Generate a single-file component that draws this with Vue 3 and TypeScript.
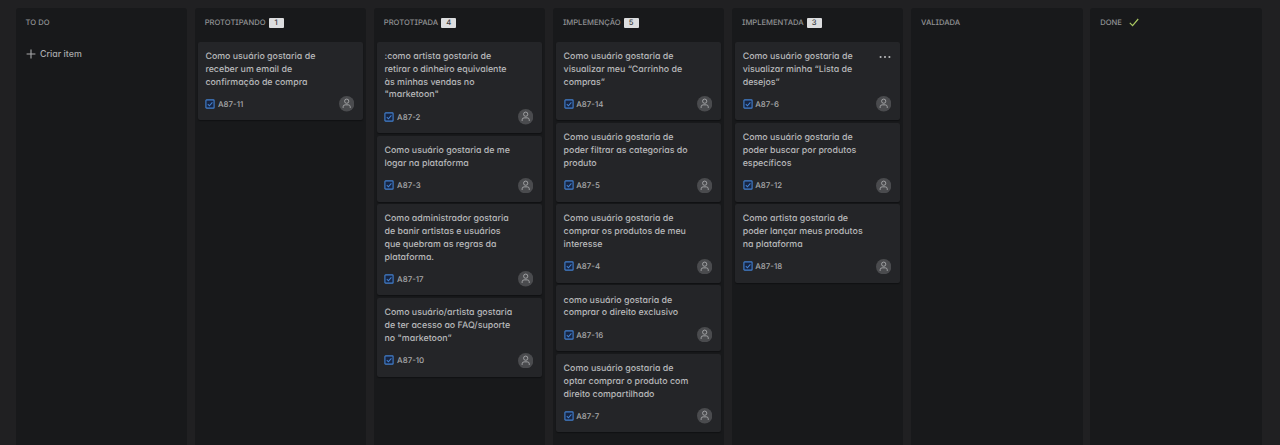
<script setup lang="ts">
interface Card {
  id: string
  lines: string[]
  menu?: boolean
}

interface Column {
  name: string
  count?: number
  done?: boolean
  create?: boolean
  cards: Card[]
}

const columns: Column[] = [
  { name: 'TO DO', create: true, cards: [] },
  {
    name: 'PROTOTIPANDO',
    count: 1,
    cards: [{ id: 'A87-11', lines: ['Como usuário gostaria de', 'receber um email de', 'confirmação de compra'] }],
  },
  {
    name: 'PROTOTIPADA',
    count: 4,
    cards: [
      { id: 'A87-2', lines: [':como artista gostaria de', 'retirar o dinheiro equivalente', 'às minhas vendas no', '"marketoon"'] },
      { id: 'A87-3', lines: ['Como usuário gostaria de me', 'logar na plataforma'] },
      { id: 'A87-17', lines: ['Como administrador gostaria', 'de banir artistas e usuários', 'que quebram as regras da', 'plataforma.'] },
      { id: 'A87-10', lines: ['Como usuário/artista gostaria', 'de ter acesso ao FAQ/suporte', 'no "marketoon”'] },
    ],
  },
  {
    name: 'IMPLEMENÇÃO',
    count: 5,
    cards: [
      { id: 'A87-14', lines: ['Como usuário gostaria de', 'visualizar meu “Carrinho de', 'compras”'] },
      { id: 'A87-5', lines: ['Como usuário gostaria de', 'poder filtrar as categorias do', 'produto'] },
      { id: 'A87-4', lines: ['Como usuário gostaria de', 'comprar os produtos de meu', 'interesse'] },
      { id: 'A87-16', lines: ['como usuário gostaria de', 'comprar o direito exclusivo'] },
      { id: 'A87-7', lines: ['Como usuário gostaria de', 'optar comprar o produto com', 'direito compartilhado'] },
    ],
  },
  {
    name: 'IMPLEMENTADA',
    count: 3,
    cards: [
      { id: 'A87-6', lines: ['Como usuário gostaria de', 'visualizar minha “Lista de', 'desejos”'], menu: true },
      { id: 'A87-12', lines: ['Como usuário gostaria de', 'poder buscar por produtos', 'específicos'] },
      { id: 'A87-18', lines: ['Como artista gostaria de', 'poder lançar meus produtos', 'na plataforma'] },
    ],
  },
  { name: 'VALIDADA', cards: [] },
  { name: 'DONE', done: true, cards: [] },
]
</script>

<template>
  <main class="board">
    <section v-for="col in columns" :key="col.name" class="column">
      <header class="head">
        <span class="name">{{ col.name }}</span>
        <span v-if="col.count" class="count">{{ col.count }}</span>
        <svg v-if="col.done" class="done" viewBox="0 0 10 9"><path d="M0.8 4.8 3.6 7.6 9.2 1" /></svg>
      </header>
      <button v-if="col.create" class="create">
        <svg class="plus" viewBox="0 0 10 10"><path d="M5 .6V9.4M.6 5H9.4" /></svg>
        <span>Criar item</span>
      </button>
      <article v-for="card in col.cards" :key="card.id" class="card">
        <div class="title">
          <div v-for="line in card.lines" :key="line" class="line">{{ line }}</div>
        </div>
        <svg v-if="card.menu" class="menu" viewBox="0 0 12 4">
          <circle cx="1.6" cy="2" r="1.05" /><circle cx="6" cy="2" r="1.05" /><circle cx="10.4" cy="2" r="1.05" />
        </svg>
        <footer class="foot">
          <svg class="task" viewBox="0 0 10 10">
            <rect x=".9" y=".9" width="8.2" height="8.2" rx=".7" />
            <path d="M2.8 5.2 4.4 6.8 7.4 3.4" />
          </svg>
          <span class="key">{{ card.id }}</span>
          <svg class="avatar" viewBox="0 0 16 16">
            <circle class="disc" cx="8" cy="8" r="8" />
            <circle class="person" cx="8" cy="5.4" r="2.2" />
            <path class="person" d="M4.3 12.4V11.2Q4.3 9.2 6.4 9.2H9.6Q11.7 9.2 11.7 11.2V12.4" />
          </svg>
        </footer>
      </article>
    </section>
  </main>
</template>

<style>
body {
  background: #202022;
}
</style>

<style scoped>
.board {
  box-sizing: border-box;
  height: 445px;
  overflow: hidden;
  padding: 8px 0 0 15.5px;
  display: flex;
  gap: 7.5px;
  background: #202022;
  font-family: Inter, "Liberation Sans", sans-serif;
  font-feature-settings: "cv11", "cv08";
  text-rendering: geometricPrecision;
}
.column {
  box-sizing: border-box;
  flex: 0 0 171.6px;
  padding: 0 3.5px;
  border-radius: 3px 3px 0 0;
  background: #18191b;
  display: flex;
  flex-direction: column;
  gap: 2.8px;
}
.head {
  height: 31.2px;
  box-sizing: border-box;
  padding: 0 6.6px 1.6px;
  display: flex;
  align-items: center;
  color: #929395;
  font-size: 7.6px;
  font-weight: 500;
}
.count {
  width: 15px;
  height: 10px;
  margin-left: 3px;
  border-radius: 1px;
  background: #dcdddf;
  color: #3a3b3e;
  font-size: 7.6px;
  line-height: 10px;
  text-align: center;
}
.done {
  width: 10px;
  height: 9px;
  margin-left: 7px;
  fill: none;
  stroke: #a9c861;
  stroke-width: 1.2;
}
.create {
  display: flex;
  align-items: center;
  gap: 4.5px;
  height: 24px;
  padding: 0 6.6px;
  border: 0;
  background: none;
  color: #a9aaac;
  font: inherit;
  font-feature-settings: inherit;
  font-size: 8.85px;
  font-weight: 500;
}
.plus {
  width: 10px;
  height: 10px;
  fill: none;
  stroke: #a9aaac;
  stroke-width: 1.1;
}
.card {
  position: relative;
  box-sizing: border-box;
  padding: 9.1px 8.6px 8.6px 7.3px;
  border-radius: 2px;
  background: #242528;
  box-shadow: 0 1px 1px #101113;
}
.title {
  color: #b7b8ba;
  font-size: 8.85px;
  font-weight: 500;
}
.line {
  height: 12.8px;
  line-height: 12.8px;
  white-space: nowrap;
}
.menu {
  position: absolute;
  top: 13.5px;
  right: 9px;
  width: 12px;
  height: 4px;
  fill: #b9babc;
}
.foot {
  display: flex;
  align-items: center;
  height: 15.4px;
  margin-top: 6.9px;
}
.task {
  width: 10px;
  height: 10px;
  fill: #172542;
  stroke: #4280d0;
  stroke-width: 1.1;
}
.key {
  margin-left: 2.6px;
  color: #a9aaac;
  font-size: 7.9px;
  font-weight: 500;
}
.avatar {
  width: 15.4px;
  height: 15.4px;
  margin-left: auto;
}
.disc {
  fill: #4a4b4e;
}
.person {
  fill: none;
  stroke: #a2a3a5;
  stroke-width: 1;
}
</style>
